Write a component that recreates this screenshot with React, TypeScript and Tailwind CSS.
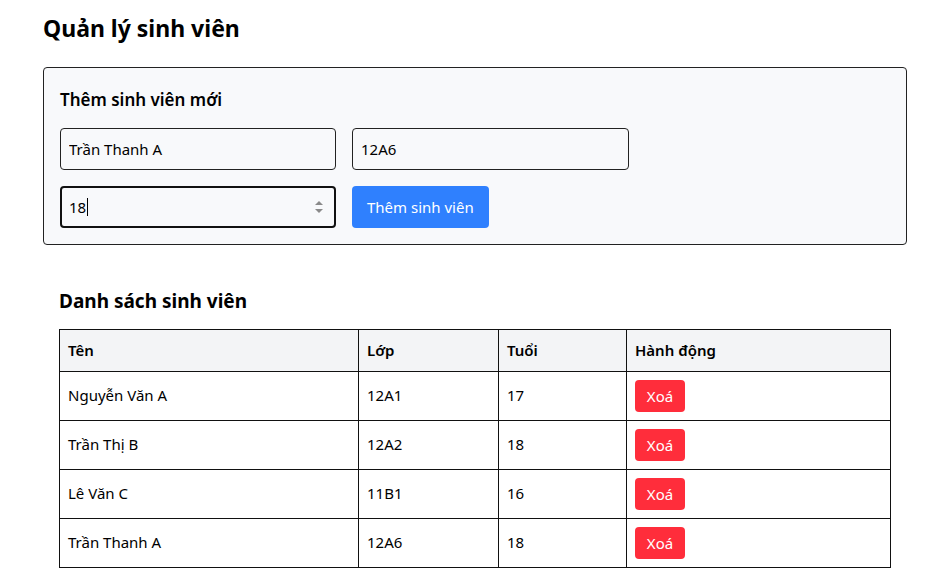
import { useState } from "react"

type Student = { id: number; name: string; className: string; age: number }

const initial: Student[] = [
  { id: 1, name: "Nguyễn Văn A", className: "12A1", age: 17 },
  { id: 2, name: "Trần Thị B", className: "12A2", age: 18 },
  { id: 3, name: "Lê Văn C", className: "11B1", age: 16 },
  { id: 4, name: "Trần Thanh A", className: "12A6", age: 18 },
]

const font = { fontFamily: '"Noto Sans", "Open Sans", sans-serif' }

export default function App() {
  const [students, setStudents] = useState(initial)
  const [name, setName] = useState("Trần Thanh A")
  const [cls, setCls] = useState("12A6")

  return (
    <div className="min-h-[581px] bg-white px-[43px] pt-[13px] text-black" style={font}>
      <h1 className="text-[23px] font-bold leading-[30px]">Quản lý sinh viên</h1>

      {/* Form */}
      <div className="mt-[24px] w-[864px] rounded-[4px] border border-[#222] bg-[#f8f9fb] px-[16px] pt-[20px] pb-[16px]">
        <h2 className="text-[17px] font-semibold leading-[24px]">Thêm sinh viên mới</h2>
        <div className="mt-[16px] grid grid-cols-[276px_277px] gap-x-[16px] gap-y-[16px]">
          <input
            value={name}
            onChange={(e) => setName(e.target.value)}
            className="h-[42px] rounded-[4px] border border-[#222] bg-[#f8f9fb] px-[8px] text-[15px] outline-none"
          />
          <input
            value={cls}
            onChange={(e) => setCls(e.target.value)}
            className="h-[42px] rounded-[4px] border border-[#222] bg-[#f8f9fb] px-[8px] text-[15px] outline-none"
          />
          <div className="flex h-[42px] items-center rounded-[4px] border-2 border-[#111] bg-[#f8f9fb] pl-[7px] pr-[10px] text-[15px]">
            <span>18</span>
            <span className="ml-px h-[18px] w-px bg-black" />
            <svg width="10" height="16" viewBox="0 0 10 16" className="ml-auto">
              <path d="M1 6 L5 2 L9 6 Z" fill="#8a8a8a" />
              <path d="M1 10 L5 14 L9 10 Z" fill="#8a8a8a" />
            </svg>
          </div>
          <div>
            <button className="h-[42px] rounded-[4px] bg-[#2f80fe] px-[15px] text-[15px] text-white">
              Thêm sinh viên
            </button>
          </div>
        </div>
      </div>

      {/* List */}
      <div className="mt-[44px] pl-[16px]">
        <h2 className="text-[19px] font-bold leading-[24px]">Danh sách sinh viên</h2>
        <table className="mt-[16px] w-[832px] border-collapse text-[15px]">
          <thead>
            <tr className="h-[42px] bg-[#f3f4f6]">
              <th className="w-[299px] border border-[#111] px-[8px] text-left font-semibold">Tên</th>
              <th className="w-[140px] border border-[#111] px-[8px] text-left font-semibold">Lớp</th>
              <th className="w-[128px] border border-[#111] px-[8px] text-left font-semibold">Tuổi</th>
              <th className="border border-[#111] px-[8px] text-left font-semibold">Hành động</th>
            </tr>
          </thead>
          <tbody>
            {students.map((s) => (
              <tr key={s.id} className="h-[49px]">
                <td className="border border-[#111] px-[8px] pb-[2px]">{s.name}</td>
                <td className="border border-[#111] px-[8px] pb-[2px]">{s.className}</td>
                <td className="border border-[#111] px-[8px] pb-[2px]">{s.age}</td>
                <td className="border border-[#111] px-[8px]">
                  <button
                    onClick={() => setStudents(students.filter((x) => x.id !== s.id))}
                    className="h-[32px] w-[50px] rounded-[4px] bg-[#ff2d3b] text-[15px] text-white"
                  >
                    Xoá
                  </button>
                </td>
              </tr>
            ))}
          </tbody>
        </table>
      </div>
    </div>
  )
}
